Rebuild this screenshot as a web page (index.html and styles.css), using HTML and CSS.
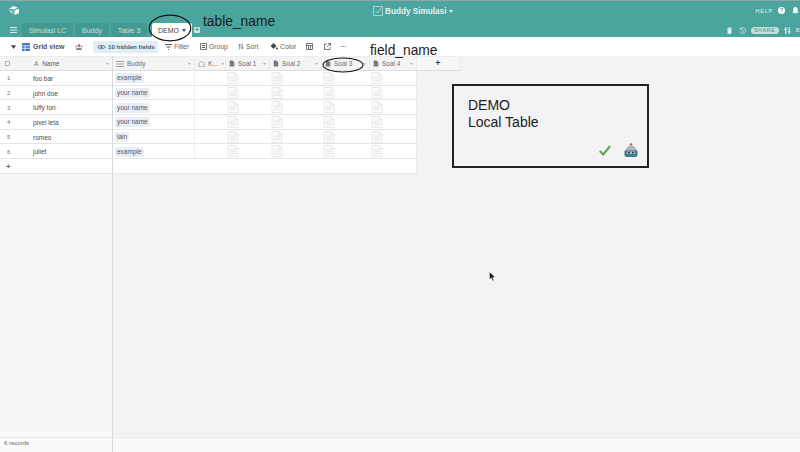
FILE: index.html
```html
<!DOCTYPE html>
<html lang="en">
<head>
<meta charset="utf-8">
<title>Buddy Simulasi</title>
<link rel="stylesheet" href="styles.css">
</head>
<body>
<svg class="defs" width="0" height="0" aria-hidden="true">
  <symbol id="doc" viewBox="0 0 12 12">
    <path d="M1 .5h7l3 3v8H1z" fill="#fbfbfc" stroke="#e0e0e2" stroke-width=".7"/>
    <path d="M8 .5v3h3" fill="none" stroke="#e0e0e2" stroke-width=".7"/>
    <path d="M2.800 5h6.400M2.800 6.800h6.400M2.800 8.600h6.400" stroke="#e3e3e5" stroke-width=".8"/>
  </symbol>
  <symbol id="file" viewBox="0 0 8 8">
    <path d="M1 0h4l2 2v6H1z" fill="#77777b"/>
    <path d="M5 0v2h2" fill="#d8d8da"/>
  </symbol>
  <symbol id="caret" viewBox="0 0 4 3">
    <path d="M0 0h4L2 3z" fill="currentColor"/>
  </symbol>
</svg>
<div class="app">
  <header class="top">
    <div class="title-row">
      <svg class="logo" viewBox="0 0 12 10" width="11" height="9"><path d="M1 3l5-3 5 2-5 2z" fill="#fff"/><path d="M7 5l5-2v5l-5 2z" fill="#fff"/><path d="M0 4l5 2v3z" fill="#fff" opacity=".8"/></svg>
      <div class="title">
        <svg class="title-icon" viewBox="0 0 10 10" width="10" height="10"><path d="M.5.5h9v9h-9zM2.500 5l2 2 3.500-5" fill="none" stroke="#bfe0dc" stroke-width=".8"/></svg>
        <span class="title-text">Buddy Simulasi</span>
        <svg class="small-caret light" width="4" height="3"><use href="#caret"/></svg>
      </div>
      <div class="help">
        <span class="help-text">HELP</span>
        <span class="help-badge">?</span>
        <svg viewBox="0 0 8 8" width="7" height="7"><path d="M4 0a2.500 2.500 0 0 1 2.500 2.500V5L8 6.500H0L1.500 5V2.500A2.500 2.500 0 0 1 4 0zM3 7h2l-1 1z" fill="#fff"/></svg>
      </div>
    </div>
    <div class="tab-row">
      <svg class="menu" viewBox="0 0 7 6" width="7" height="6"><path d="M0 .5h7M0 3h7M0 5.500h7" stroke="#e4f2f0" stroke-width=".9"/></svg>
      <span class="tab">Simulasi LC</span>
      <span class="tab tab-buddy">Buddy</span>
      <span class="tab tab-three">Table 3</span>
      <span class="tab tab-active">DEMO <svg class="small-caret" width="4" height="3"><use href="#caret"/></svg></span>
      <span class="add-tab">+</span>
      <div class="tab-actions">
        <svg class="trash" viewBox="0 0 6 8" width="5" height="7"><path d="M0 1h6v1H0zM2 0h2v1H2zM.7 2.500h4.600V8H.7z" fill="#e8f4f2"/></svg>
        <svg viewBox="0 0 8 8" width="7" height="7"><path d="M1.500 2A3.300 3.300 0 1 1 1 5M4 2v2.300l1.500 1" fill="none" stroke="#e8f4f2" stroke-width=".8"/><path d="M0 1l2.500 0 0 2.200z" fill="#e8f4f2"/></svg>
        <span class="share">SHARE</span>
        <svg viewBox="0 0 8 8" width="7" height="7"><path d="M2 0v8M6 0v8M0 2.500h4M4 5.500h4" stroke="#e8f4f2" stroke-width="1.200"/></svg>
        <span class="blocks">BLOCKS</span>
      </div>
    </div>
  </header>

  <nav class="toolbar">
    <svg class="view-caret" width="5" height="4"><use href="#caret"/></svg>
    <svg class="grid-icon" viewBox="0 0 8 8" width="8" height="8"><path d="M0 0h8v8H0z" fill="#4a78c8"/><path d="M0 2.700h8M0 5.300h8M3 2.700V8" stroke="#fff" stroke-width=".7"/></svg>
    <span class="view-name">Grid view</span>
    <svg class="people" viewBox="0 0 8 6" width="8" height="6"><circle cx="4" cy="1.600" r="1.500" fill="#88888c"/><circle cx="1.300" cy="2.400" r="1" fill="#a2a2a6"/><circle cx="6.700" cy="2.400" r="1" fill="#a2a2a6"/><path d="M1 6a3 2.300 0 0 1 6 0z" fill="#88888c"/></svg>
    <span class="tool tool-hidden">
      <svg viewBox="0 0 9 6" width="9" height="6"><path d="M.5 3C2 .8 7 .8 8.500 3 7 5.200 2 5.200.5 3z" fill="none" stroke="#4f5666" stroke-width=".8"/><circle cx="4.500" cy="3" r="1.100" fill="#4f5666"/></svg>
      10 hidden fields
    </span>
    <span class="tool tool-filter">
      <svg viewBox="0 0 7 6" width="7" height="6"><path d="M0 .5h7M1.500 3h4M3 5.500h1" stroke="#55555a" stroke-width="1"/></svg>
      Filter
    </span>
    <span class="tool tool-group">
      <svg viewBox="0 0 7 7" width="7" height="7"><path d="M.5.500h6v6h-6z" fill="none" stroke="#55555a" stroke-width=".8"/><path d="M2 2h3v1H2zM2 4h3v1H2z" fill="#55555a"/></svg>
      Group
    </span>
    <span class="tool tool-sort">
      <svg viewBox="0 0 7 7" width="6" height="7"><path d="M2 7V1M.5 2.500L2 .800l1.500 1.700M5 0v6M3.500 4.500L5 6.200l1.500-1.700" fill="none" stroke="#55555a" stroke-width=".8"/></svg>
      Sort
    </span>
    <span class="tool tool-color">
      <svg viewBox="0 0 8 7" width="8" height="7"><path d="M3.500 0l3 3-3 3-3-3z" fill="#44444a"/><circle cx="7" cy="5.500" r="1" fill="#44444a"/></svg>
      Color
    </span>
    <svg class="tool-icon rows-icon" viewBox="0 0 7 7" width="7" height="7"><path d="M.5.500h6v6h-6zM2.500 2.500V6.500M4.500 2.500V6.500M.5 2.500h6" fill="none" stroke="#66666a" stroke-width=".9"/></svg>
    <svg class="tool-icon share-icon" viewBox="0 0 7 7" width="7" height="7"><path d="M3 1H.5v5.500H6V4M3 4l3.500-3.500M4 .5h2.500V3" fill="none" stroke="#55555a" stroke-width=".8"/></svg>
    <span class="dots">•••</span>
  </nav>

  <main class="main">
    <section class="pane-left">
      <div class="head-row left-cols">
        <span class="check"></span>
        <span class="head-name"><span class="type-a">A</span> Name</span>
        <svg class="head-caret" width="3" height="2"><use href="#caret"/></svg>
      </div>
      <div class="row left-cols"><span class="num">1</span><span class="name">foo bar</span></div>
      <div class="row left-cols"><span class="num">2</span><span class="name">john doe</span></div>
      <div class="row left-cols"><span class="num">3</span><span class="name">luffy ton</span></div>
      <div class="row left-cols"><span class="num">4</span><span class="name">pixel leta</span></div>
      <div class="row left-cols"><span class="num">5</span><span class="name">romeo</span></div>
      <div class="row left-cols"><span class="num">6</span><span class="name">juliet</span></div>
      <div class="row left-cols"><span class="num plus">+</span></div>
      <div class="fill"></div>
      <footer class="foot">6 records</footer>
    </section>

    <section class="pane-right">
      <div class="head-strip">
        <div class="cell-head"><svg class="lines" viewBox="0 0 8 6" width="8" height="6"><path d="M0 .5h8M0 3h8M0 5.500h8" stroke="#8a8a8e" stroke-width=".8"/></svg>Buddy<svg class="head-caret" width="3" height="2"><use href="#caret"/></svg></div>
        <div class="cell-head"><svg class="lines" viewBox="0 0 8 7" width="7" height="6"><path d="M1 7V3l3-3 3 3v4z" fill="none" stroke="#8a8a8e" stroke-width=".8"/></svg>K...<svg class="head-caret" width="3" height="2"><use href="#caret"/></svg></div>
        <div class="cell-head"><svg class="file" width="6" height="7"><use href="#file"/></svg>Soal 1<svg class="head-caret" width="3" height="2"><use href="#caret"/></svg></div>
        <div class="cell-head"><svg class="file" width="6" height="7"><use href="#file"/></svg>Soal 2<svg class="head-caret" width="3" height="2"><use href="#caret"/></svg></div>
        <div class="cell-head"><svg class="file" width="6" height="7"><use href="#file"/></svg>Soal 3<svg class="head-caret" width="3" height="2"><use href="#caret"/></svg></div>
        <div class="cell-head"><svg class="file" width="6" height="7"><use href="#file"/></svg>Soal 4<svg class="head-caret" width="3" height="2"><use href="#caret"/></svg></div>
        <div class="cell-plus">+</div>
      </div>

      <div class="table-row"><div class="cell"><span class="chip">example</span></div><div class="cell"></div><div class="cell"><svg class="doc"><use href="#doc"/></svg></div><div class="cell"><svg class="doc"><use href="#doc"/></svg></div><div class="cell"><svg class="doc"><use href="#doc"/></svg></div><div class="cell"><svg class="doc"><use href="#doc"/></svg></div></div>
      <div class="table-row"><div class="cell"><span class="chip">your name</span></div><div class="cell"></div><div class="cell"><svg class="doc"><use href="#doc"/></svg></div><div class="cell"><svg class="doc"><use href="#doc"/></svg></div><div class="cell"><svg class="doc"><use href="#doc"/></svg></div><div class="cell"><svg class="doc"><use href="#doc"/></svg></div></div>
      <div class="table-row"><div class="cell"><span class="chip">your name</span></div><div class="cell"></div><div class="cell"><svg class="doc"><use href="#doc"/></svg></div><div class="cell"><svg class="doc"><use href="#doc"/></svg></div><div class="cell"><svg class="doc"><use href="#doc"/></svg></div><div class="cell"><svg class="doc"><use href="#doc"/></svg></div></div>
      <div class="table-row"><div class="cell"><span class="chip">your name</span></div><div class="cell"></div><div class="cell"><svg class="doc"><use href="#doc"/></svg></div><div class="cell"><svg class="doc"><use href="#doc"/></svg></div><div class="cell"><svg class="doc"><use href="#doc"/></svg></div><div class="cell"><svg class="doc"><use href="#doc"/></svg></div></div>
      <div class="table-row"><div class="cell"><span class="chip">lain</span></div><div class="cell"></div><div class="cell"><svg class="doc"><use href="#doc"/></svg></div><div class="cell"><svg class="doc"><use href="#doc"/></svg></div><div class="cell"><svg class="doc"><use href="#doc"/></svg></div><div class="cell"><svg class="doc"><use href="#doc"/></svg></div></div>
      <div class="table-row"><div class="cell"><span class="chip">example</span></div><div class="cell"></div><div class="cell"><svg class="doc"><use href="#doc"/></svg></div><div class="cell"><svg class="doc"><use href="#doc"/></svg></div><div class="cell"><svg class="doc"><use href="#doc"/></svg></div><div class="cell"><svg class="doc"><use href="#doc"/></svg></div></div>
      <div class="table-row table-empty"></div>
      <div class="fill"></div>
      <footer class="foot"></footer>
    </section>
  </main>

  <svg class="ring ring-tab" viewBox="0 0 44 28"><ellipse cx="22" cy="14" rx="20.800" ry="12.800" fill="none" stroke="#111" stroke-width="1.200"/></svg>
  <svg class="ring ring-field" viewBox="0 0 42 16"><ellipse cx="21" cy="8" rx="20" ry="7" fill="none" stroke="#111" stroke-width="1.100"/></svg>
  <span class="note note-table">table_name</span>
  <span class="note note-field">field_name</span>

  <aside class="demo-card">
    <div class="demo-text">DEMO<br>Local Table</div>
    <div class="demo-icons">
      <svg viewBox="0 0 12 11" width="12" height="11"><path d="M.8 6l3.400 3.500L11.200 1" fill="none" stroke="#65a952" stroke-width="2.300"/></svg>
      <svg viewBox="0 0 14 14" width="14" height="14"><circle cx="7" cy="1.500" r="1.300" fill="#c9604f"/><path d="M1.500 8a5.500 5.500 0 0 1 11 0z" fill="#a9b8bf"/><path d="M.5 7.500h13v4A2.500 2.500 0 0 1 11 14H3a2.500 2.500 0 0 1-2.500-2.500z" fill="#3f7a92"/><path d="M3 8.500h8v2.500H3z" fill="#a7c0ca"/><circle cx="5" cy="9.700" r=".9" fill="#223"/><circle cx="9" cy="9.700" r=".9" fill="#223"/></svg>
    </div>
  </aside>

  <svg class="cursor" viewBox="0 0 8 12" width="7" height="11"><path d="M.5.500v9l2.200-1.900 1.500 3.400 1.500-.7-1.500-3.200h3z" fill="#111" stroke="#fff" stroke-width=".6"/></svg>
</div>
</body>
</html>
```

FILE: styles.css
```css
* {
  box-sizing: border-box;
}

html,
body {
  margin: 0;
  padding: 0;
  height: 100%;
  overflow: hidden;
}

body {
  font-family: "Liberation Sans", Arial, sans-serif;
  font-size: 6.500px;
  color: #4a4a4e;
  background: #f3f2f4;
}

.defs {
  position: absolute;
}

.app {
  position: relative;
  width: 800px;
  height: 452px;
  display: flex;
  flex-direction: column;
  overflow: hidden;
}

/* Header */
.top {
  height: 37px;
  flex: none;
  display: flex;
  flex-direction: column;
  background: #4aa59e;
  border-top: 1px solid #8fa8a5;
}

.title-row {
  height: 22px;
  position: relative;
  display: flex;
  align-items: center;
  justify-content: space-between;
  padding: 0 1px 3px 8px;
}

.logo {
  flex: none;
}

.title {
  position: absolute;
  left: 373px;
  top: 5px;
  display: flex;
  align-items: center;
  gap: 2px;
}

.title-text {
  font-size: 8.200px;
  font-weight: bold;
  color: #e6f3f1;
}

.title-icon {
  flex: none;
}

.small-caret {
  flex: none;
  color: #555;
}

.small-caret.light {
  color: #e6f3f1;
  margin-left: 1px;
}

.help {
  display: flex;
  align-items: center;
  gap: 5px;
  color: #e6f3f1;
}

.help-text {
  font-size: 5.500px;
  letter-spacing: 0.800px;
}

.help-badge {
  width: 7px;
  height: 7px;
  border-radius: 50%;
  background: #fff;
  color: #4aa59e;
  font-size: 6px;
  font-weight: bold;
  line-height: 7px;
  text-align: center;
  margin-right: 2px;
}

.tab-row {
  flex: 1;
  display: flex;
  align-items: flex-end;
  padding-left: 10px;
}

.menu {
  flex: none;
  align-self: center;
  margin-right: 5px;
}

.tab {
  height: 14px;
  padding: 0 7px;
  margin-right: 2px;
  width: 51px;
  display: flex;
  align-items: center;
  justify-content: center;
  white-space: nowrap;
  font-size: 7px;
  color: #c3e2df;
  background: #429a92;
  border-radius: 2px 2px 0 0;
}

.tab-buddy {
  width: 34px;
}

.tab-three {
  width: 36px;
}

.tab-active {
  width: 40px;
  margin-left: 3px;
  margin-right: 0;
  background: #fff;
  color: #444;
  gap: 3px;
}

.add-tab {
  width: 6px;
  height: 6px;
  margin: 0 0 4px 2px;
  border-radius: 1px;
  background: #cfe8e5;
  color: #439a92;
  font-size: 7px;
  font-weight: bold;
  line-height: 6px;
  text-align: center;
}

.tab-actions {
  margin-left: auto;
  margin-right: -21px;
  display: flex;
  align-items: center;
  align-self: center;
  gap: 5px;
  flex: none;
}

.trash {
  margin-right: 2px;
}

.share {
  width: 28px;
  height: 7px;
  border-radius: 4px;
  background: #c3e0dc;
  color: #4d8f89;
  font-size: 5.500px;
  letter-spacing: 0.500px;
  line-height: 7px;
  text-align: center;
}

.blocks {
  font-size: 5.500px;
  color: #e6f3f1;
  letter-spacing: 0.500px;
}

/* Toolbar */
.toolbar {
  height: 19px;
  flex: none;
  display: flex;
  align-items: center;
  padding-left: 11px;
  background: #fff;
  color: #66666a;
  font-size: 6.800px;
}

.view-caret {
  color: #444;
  margin-right: 6px;
}

.grid-icon {
  margin-right: 3px;
}

.view-name {
  width: 42px;
  font-weight: bold;
  color: #55555a;
  font-size: 7px;
}

.people {
  margin-right: 10px;
}

.tool {
  display: flex;
  align-items: center;
  gap: 2px;
  white-space: nowrap;
}

.tool-hidden {
  width: 65px;
  height: 12px;
  padding-left: 4px;
  margin-right: 7px;
  background: #dfeef7;
  border-radius: 2px;
  color: #4f5666;
  font-weight: bold;
  font-size: 6.200px;
}

.tool-filter {
  width: 35px;
}

.tool-group {
  width: 38px;
}

.tool-sort {
  width: 32px;
}

.tool-color {
  width: 36px;
}

.tool-icon {
  flex: none;
}

.rows-icon {
  margin-right: 11px;
}

.share-icon {
  margin-right: 10px;
}

.dots {
  font-size: 4px;
  color: #55555a;
  letter-spacing: 0.300px;
}

/* Grid */
.main {
  flex: 1;
  min-height: 0;
  display: flex;
}

.pane-left {
  width: 113px;
  flex: none;
  display: flex;
  flex-direction: column;
  background: #f9f8f9;
  border-right: 1px solid #d9d9db;
}

.pane-right {
  flex: 1;
  min-width: 0;
  display: flex;
  flex-direction: column;
  background: #f3f2f4;
}

.head-row,
.head-strip {
  height: 15px;
  flex: none;
  background: #f4f4f5;
  border-top: 1px solid #ececee;
  border-bottom: 1px solid #dedee0;
}

.head-strip {
  width: 347px;
  display: grid;
  grid-template-columns: 82px 31px 44px 52px 48px 47px 43px;
}

.left-cols {
  display: flex;
  align-items: center;
}

.row {
  height: 14.700px;
  flex: none;
  background: #fff;
  border-bottom: 1px solid #e6e6e8;
}

.check {
  width: 5px;
  height: 5px;
  margin-left: 5px;
  border: 1px solid #a9a9ad;
  border-radius: 1px;
  background: #fff;
}

.head-name {
  margin-left: 24px;
  color: #5d5d61;
}

.type-a {
  margin-right: 2px;
  color: #77777b;
}

.head-caret {
  margin-left: auto;
  margin-right: 3px;
  color: #a8a8ac;
  flex: none;
}

.num {
  width: 33px;
  margin-top: 1px;
  padding-left: 7px;
  font-size: 6px;
  color: #77777b;
}

.plus {
  font-size: 8px;
  font-weight: bold;
  padding-left: 6px;
  color: #66666a;
}

.name {
  margin-top: 1px;
  color: #4a4a4e;
}

.cell-head {
  display: flex;
  align-items: center;
  gap: 3px;
  padding-left: 3px;
  color: #6b6b6f;
  white-space: nowrap;
  border-right: 1px solid #eaeaec;
}

.cell-plus {
  background: #f7f7f8;
  font-size: 9px;
  font-weight: bold;
  line-height: 13px;
  text-align: center;
  color: #444;
  padding-left: 0;
  border-right: 1px solid #ececee;
}

.file,
.lines {
  flex: none;
}

.table-row {
  width: 304px;
  height: 14.700px;
  flex: none;
  display: grid;
  grid-template-columns: 82px 31px 44px 52px 48px 47px;
  background: #fff;
  border-bottom: 1px solid #e6e6e8;
  border-right: 1px solid #ececee;
}

.table-empty {
  display: block;
}

.cell {
  display: flex;
  align-items: center;
  padding-left: 1px;
  min-width: 0;
  overflow: hidden;
}

.cell:first-child {
  padding-left: 2px;
  border-right: 1px solid #f0f0f2;
}

.chip {
  height: 10px;
  margin-top: 1px;
  padding: 0 2px;
  background: #e9eef5;
  border-radius: 2px;
  color: #55555c;
  font-size: 6.500px;
  line-height: 10px;
}

.doc {
  width: 12px;
  height: 12px;
  flex: none;
}

.fill {
  flex: 1;
}

.foot {
  height: 15px;
  flex: none;
  padding-left: 4px;
  background: #fbfafb;
  border-top: 1px solid #e8e8ea;
  color: #66666a;
  font-size: 6px;
  line-height: 11px;
}

/* Annotations over the screenshot */
.ring {
  position: absolute;
}

.ring-tab {
  left: 148px;
  top: 14px;
  width: 44px;
  height: 28px;
}

.ring-field {
  left: 322px;
  top: 57px;
  width: 42px;
  height: 16px;
}

.note {
  position: absolute;
  font-size: 13.800px;
  line-height: 16px;
  color: #1c1c1c;
  white-space: nowrap;
}

.note-table {
  left: 203px;
  top: 14px;
}

.note-field {
  left: 370px;
  top: 43px;
}

.demo-card {
  position: absolute;
  left: 452px;
  top: 84px;
  width: 197px;
  height: 84px;
  padding: 11px 9px 9px 14px;
  display: flex;
  flex-direction: column;
  justify-content: space-between;
  background: #f3f2f4;
  border: 2px solid #222;
}

.demo-text {
  font-size: 14px;
  line-height: 17px;
  color: #1c1c1c;
}

.demo-icons {
  display: flex;
  justify-content: flex-end;
  align-items: center;
  gap: 13px;
}

.cursor {
  position: absolute;
  left: 489px;
  top: 271px;
}
```
